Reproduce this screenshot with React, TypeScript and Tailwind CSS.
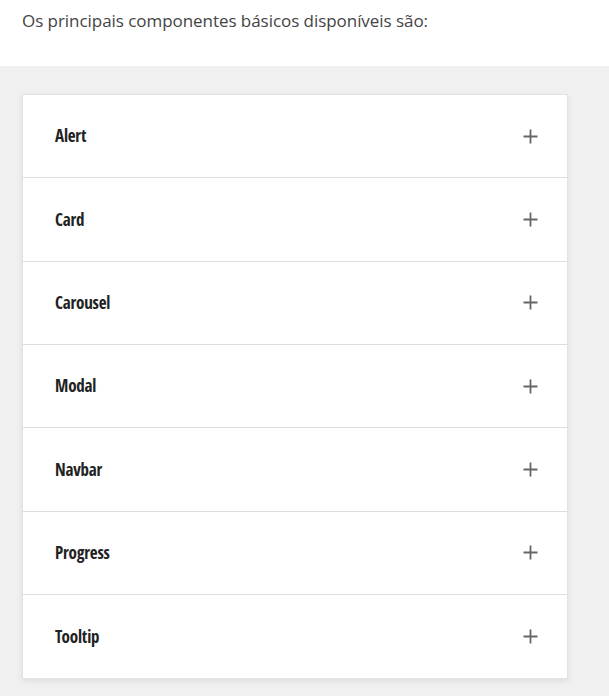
const items = ['Alert', 'Card', 'Carousel', 'Modal', 'Navbar', 'Progress', 'Tooltip'];

function Plus() {
  return (
    <svg width="15" height="15" viewBox="0 0 15 15" className="text-[#666]">
      <path d="M7.5 0.5v14M0.5 7.5h14" stroke="currentColor" strokeWidth="1.8" fill="none" />
    </svg>
  );
}

export default function App() {
  return (
    <div className="w-[609px] h-[696px] overflow-hidden bg-[#f0f0f0] font-['Open_Sans',sans-serif]">
      <div className="h-[66px] bg-white px-[22px] pt-[8px]">
        <p className="text-[17px] text-[#444] leading-[25px] tracking-[-0.05px]">Os principais componentes básicos disponíveis são:</p>
      </div>
      <div className="pt-[28px] pl-[22px]">
        <div className="w-[546px] bg-white border border-[#e2e2e2] shadow-[0_2px_6px_rgba(0,0,0,0.08)]">
          {items.map((item, i) => (
            <div
              key={item}
              className={
                'h-[83.33px] flex items-center justify-between pl-[32px] pr-[29px] ' +
                (i < items.length - 1 ? 'border-b border-[#dedede]' : '')
              }
            >
              <span className="text-[17px] font-bold text-[#222] font-stretch-condensed font-['Open_Sans_Condensed','Open_Sans','Liberation_Sans_Narrow',sans-serif] tracking-[-0.2px]">
                {item}
              </span>
              <Plus />
            </div>
          ))}
        </div>
      </div>
    </div>
  );
}
